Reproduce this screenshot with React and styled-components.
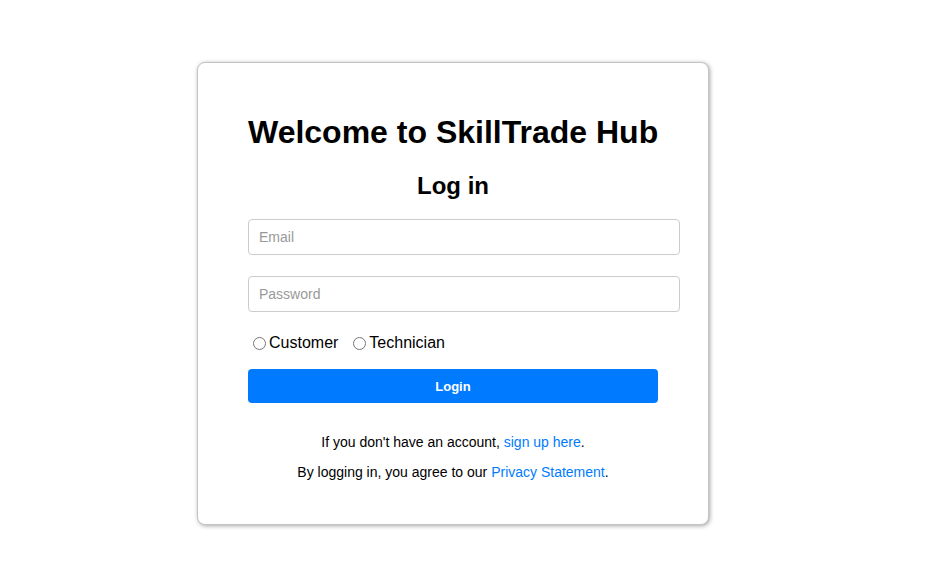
import React, { useState } from 'react';
import styled, { createGlobalStyle } from 'styled-components';

const GlobalStyle = createGlobalStyle`
  html, body {
    margin: 0;
    padding: 0;
    background: #fff;
    font-family: "Liberation Sans", Arial, sans-serif;
  }
`;

const Page = styled.div`
  display: flex;
  align-items: flex-start;
  padding: 62px 0 40px 197px;
`;

const Card = styled.div`
  width: 410px;
  padding: 30px 50px 44px;
  border: 1px solid #c4c4c4;
  border-radius: 8px;
  box-shadow: 1px 1px 4px rgba(0, 0, 0, 0.35);
  background: #fff;
  text-align: center;
`;

const Title = styled.h1`
  font-size: 32px;
  font-weight: bold;
  margin: 21px 0;
  color: #000;
  white-space: nowrap;
`;

const Subtitle = styled.h2`
  font-size: 24px;
  font-weight: bold;
  margin: 21px 0 19px;
  color: #000;
`;

const Form = styled.form`
  display: flex;
  flex-direction: column;
  align-items: flex-start;
`;

const Input = styled.input`
  width: 100%;
  padding: 8px 10px;
  margin-bottom: 21px;
  border: 1px solid #ccc;
  border-radius: 4px;
  font-family: "Liberation Sans", Arial, sans-serif;
  font-size: 14px;
  line-height: 18px;
  color: #000;
  outline: none;
  &::placeholder {
    color: #999;
  }
`;

const RadioRow = styled.div`
  display: flex;
  align-items: center;
  gap: 10px;
  margin: 1px 0 17px;
`;

const RadioLabel = styled.label`
  display: flex;
  align-items: center;
  font-size: 16px;
  color: #000;
  input {
    margin: 1px 3px 0 5px;
    width: 13px;
    height: 13px;
  }
`;

const LoginButton = styled.button`
  width: 100%;
  height: 34px;
  border: none;
  border-radius: 4px;
  background: #007bff;
  color: #fff;
  font-family: "Liberation Sans", Arial, sans-serif;
  font-size: 13px;
  font-weight: bold;
  cursor: pointer;
`;

const Note = styled.p`
  font-size: 14px;
  color: #000;
  margin: ${(p) => (p.first ? '31px 0 0' : '14px 0 0')};
`;

const Link = styled.a`
  color: #007bff;
  text-decoration: none;
`;

export default function App() {
  const [role, setRole] = useState('');
  return (
    <>
      <GlobalStyle />
      <Page>
        <Card>
          <Title>Welcome to SkillTrade Hub</Title>
          <Subtitle>Log in</Subtitle>
          <Form onSubmit={(e) => e.preventDefault()}>
            <Input type="email" placeholder="Email" />
            <Input type="password" placeholder="Password" />
            <RadioRow>
              <RadioLabel>
                <input
                  type="radio"
                  name="role"
                  checked={role === 'customer'}
                  onChange={() => setRole('customer')}
                />
                Customer
              </RadioLabel>
              <RadioLabel>
                <input
                  type="radio"
                  name="role"
                  checked={role === 'technician'}
                  onChange={() => setRole('technician')}
                />
                Technician
              </RadioLabel>
            </RadioRow>
            <LoginButton type="submit">Login</LoginButton>
          </Form>
          <Note first>
            If you don't have an account, <Link href="#">sign up here</Link>.
          </Note>
          <Note>
            By logging in, you agree to our <Link href="#">Privacy Statement</Link>.
          </Note>
        </Card>
      </Page>
    </>
  );
}
